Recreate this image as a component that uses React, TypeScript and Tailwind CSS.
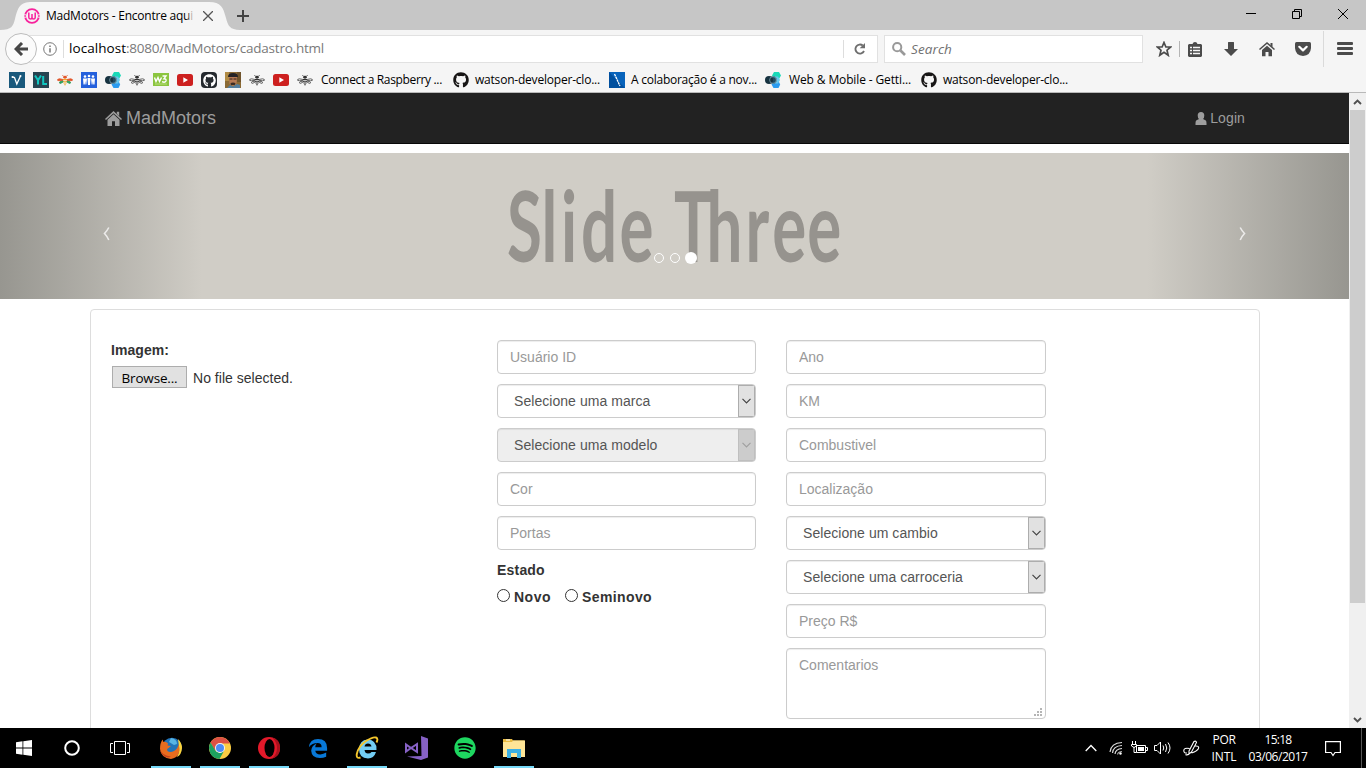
import { useLayoutEffect, useRef, type ReactNode } from "react";
import { FaGithub, FaSpotify } from "react-icons/fa";

/** Single line of text whose tracking is adjusted so that it fills the given width. */
function Fit({ w, children, className = "" }: { w: number; children: string; className?: string }) {
  const ref = useRef<HTMLSpanElement>(null);
  useLayoutEffect(() => {
    const el = ref.current;
    if (!el) return;
    el.style.letterSpacing = "0px";
    const natural = el.getBoundingClientRect().width;
    el.style.letterSpacing = `${(w - natural) / children.length}px`;
  }, [w, children]);
  return (
    <span ref={ref} className={`inline-block shrink-0 whitespace-pre ${className}`}>
      {children}
    </span>
  );
}

/* ---------- bookmark icons ---------- */

function Bee({ color = false }: { color?: boolean }) {
  const body = color ? "#f0a92c" : "#333";
  const wing = color ? "#e2572b" : "#555";
  const low = color ? "#2f9e5b" : "#555";
  return (
    <svg width="16" height="16" viewBox="0 0 16 16">
      <g transform="translate(0 1.6) scale(1 .8)">
        <path d="M6.5 7.500 2.500 6.500Q0 7 .6 8.400Q1.500 9.500 6 8.400zM9.500 7.500 13.500 6.500Q16 7 15.400 8.400Q14.500 9.500 10 8.400z" fill={color ? wing : "#f5f5f5"} stroke={wing} />
        <path d="M6 9.300 3 10.200Q1.500 12 3.500 12.300L6.500 10.200zM10 9.300 13 10.200Q14.500 12 12.500 12.300L9.500 10.200z" fill={color ? low : "#f5f5f5"} stroke={low} />
        <path d="M6.700 3.500 5.500 2M9.300 3.500 10.500 2" stroke={color ? "#e2572b" : "#333"} fill="none" />
        <circle cx="8" cy="4.500" r="1.800" fill={color ? "#e2572b" : "#333"} />
        <path d="M6 6.700h4v1.400H6zM6 9h4v1.300H6zM6.400 11.200h3.200v1.200H6.400zM7.200 13.200h1.600v1.500H7.200z" fill={body} />
      </g>
    </svg>
  );
}

function YouTube() {
  return (
    <svg width="16" height="16" viewBox="0 0 16 16">
      <rect y="2" width="16" height="12" rx="2.500" fill="#cd201f" />
      <path d="M6.300 5.300v5.400L11 8z" fill="#fff" />
    </svg>
  );
}

function Hexes() {
  return (
    <svg width="16" height="16" viewBox="0 0 16 16">
      <path d="M9 0h5l2 3.500-2 3.500H9L7 3.500z" fill="#19d9b8" />
      <path d="M8.500 9h5l1.700 3.500-1.700 3.500h-5l-2-3.500z" fill="#2a9bf0" />
      <path d="M9.500 4.500H13L15 8l-2 3.500H9.500z" fill="#67c8ee" />
      <circle cx="8" cy="8" r="3.700" fill="#1f4a60" />
      <circle cx="4" cy="8" r="4" fill="#173240" />
      <circle cx="8" cy="8" r="3.400" fill="none" stroke="#9cc3d2" strokeWidth=".6" />
    </svg>
  );
}

const small: ReactNode[] = [
  <svg key="v" width="16" height="16" viewBox="0 0 16 16">
    <rect width="16" height="16" fill="#19597c" />
    <path d="M3.500 5 5.500 5.500 7.800 12 11.500 4" fill="none" stroke="#fff" strokeWidth="1.300" />
    <circle cx="3.500" cy="5" r="1" fill="#fff" /><circle cx="11.500" cy="4" r="1" fill="#fff" />
  </svg>,
  <svg key="yl" width="16" height="16" viewBox="0 0 16 16">
    <rect width="16" height="16" fill="#264451" />
    <path d="M2 3.500 5 8.200V12.500M8 3.500 5 8.200M10.200 4V12H14" fill="none" stroke="#10c7c1" strokeWidth="2" />
  </svg>,
  <Bee key="bc" color />,
  <svg key="ppl" width="16" height="16" viewBox="0 0 16 16">
    <rect width="16" height="16" fill="#2460dc" />
    <g fill="#fff">
      <circle cx="4" cy="4.500" r="1.300" /><circle cx="8" cy="4" r="1.300" /><circle cx="12" cy="4.500" r="1.300" />
      <path d="M2 6.500h4l-.7 6H4.500L4.200 9l-.5 3.500H2.500zM6.500 6h3L9 13H7zM10 6.500h4l-.5 6h-1.200L12 9l-.5 3.500h-.8z" />
    </g>
  </svg>,
  <Hexes key="hx" />,
  <Bee key="b1" />,
  <svg key="w3" width="16" height="16" viewBox="0 0 16 16">
    <rect y="1" width="16" height="13" fill="#8bc53f" />
    <path d="M1.500 5.500 3 9.500 5 5.500 6.500 9.500 8.500 5.500M9.500 4H13L11 6.700Q13.500 6.700 13 9Q12 11 9 9.700" fill="none" stroke="#fff" strokeWidth="1.400" />
    <path d="M2 12h12" stroke="#b9dd80" />
  </svg>,
  <YouTube key="y1" />,
  <div key="gh" className="flex h-4 w-4 items-center justify-center rounded-sm bg-[#24292e] text-white"><FaGithub size={13} /></div>,
  <svg key="face" width="16" height="16" viewBox="0 0 16 16">
    <rect width="16" height="16" fill="#8b6a35" />
    <path d="M0 0h4v9H0z" fill="#b08b45" /><path d="M12 0h4v10h-4z" fill="#70542c" />
    <path d="M4 5h8l-.5 7L8 14l-3.500-2z" fill="#b77a55" />
    <path d="M3 5Q3 1 8 1t5 4L11 5H5z" fill="#252326" />
    <path d="M5.500 11 8 10.500l2.500.5-.7 2H6z" fill="#3c2c25" />
    <path d="M4.500 7h3M8.500 7h3" stroke="#33231c" /><path d="M2 16 5 13l3 1.500L12 12l3 1v3z" fill="#557e9e" />
  </svg>,
  <Bee key="b2" />,
  <YouTube key="y2" />,
  <Bee key="b3" />,
];

/* ---------- browser chrome ---------- */

function TabBar() {
  return (
    <div className="relative flex h-[30px] shrink-0 bg-[#c6c6c6]">
      <svg className="absolute left-0 top-0" width="240" height="30">
        <path d="M0 30C12 30 13 26 15 19C18 7 20 2 32 2H209C221 2 223 7 226 18C228 26 230 30 241 30z" fill="#f5f5f5" />
      </svg>
      <div className="relative flex h-8 w-[240px] items-center pl-6">
        <svg width="16" height="16" viewBox="0 0 16 16" className="shrink-0">
          <circle cx="8" cy="8" r="6.900" fill="none" stroke="#f7229c" strokeWidth="1.800" />
          <path d="M0 6.800h2M14 6.800h2M0 9.200h2M14 9.200h2" stroke="#f5f5f5" strokeWidth=".9" />
          <path d="M4.800 4.500V9.300Q4.800 11 6.400 11T8 9.300V6M8 9.300Q8 11 9.600 11T11.200 9.300V4.500" fill="none" stroke="#f7229c" strokeWidth="1.500" />
        </svg>
        <div className="relative ml-[6px] w-[148px] text-[12px] text-black">
          <Fit w={147}>MadMotors - Encontre aqui</Fit>
          <span className="absolute right-0 top-0 h-full w-2 bg-linear-to-r from-transparent to-[#f5f5f5]" />
        </div>
        <svg width="10" height="10" className="ml-[9px]" stroke="#555" strokeWidth="1.300"><path d="M0 0 10 10M10 0 0 10" /></svg>
      </div>
      <svg width="12" height="12" className="mt-[10px] -ml-[3px]" stroke="#444" strokeWidth="2"><path d="M0 6H12M6 0V12" /></svg>
      <div className="ml-auto flex items-start gap-[36px] pr-[18px] pt-[9px]">
        <svg width="10" height="10" stroke="#000"><path d="M0 4.500H10" /></svg>
        <svg width="10" height="10" stroke="#000" fill="none"><path d="M.5 2.500h7v7h-7zM2.500 2.500V.5h7v7h-2" /></svg>
        <svg width="10" height="10" stroke="#000"><path d="M0 0 10 10M10 0 0 10" /></svg>
      </div>
    </div>
  );
}

function NavRow() {
  return (
    <div className="flex h-[38px] shrink-0 items-center bg-[#f5f5f5]">
      <div className="relative z-10 ml-[5px] flex h-8 w-8 shrink-0 items-center justify-center rounded-full border border-[#bcbcbc] bg-[#fbfbfb]">
        <svg width="14" height="14" viewBox="0 0 14 14" fill="none" stroke="#474747" strokeWidth="3"><path d="M8 1 2 7 8 13M2.500 7H14" /></svg>
      </div>
      <div className="-ml-2 flex h-[28px] w-[849px] items-center border border-[#e1e1e1] bg-white">
        <svg width="14" height="14" className="ml-[13px]" fill="none" stroke="#777"><circle cx="7" cy="7" r="6.300" /><path d="M7 6.200V10.500M7 3.500V5" strokeWidth="1.500" /></svg>
        <span className="ml-[6px] h-[18px] w-px bg-[#ddd]" />
        <div className="ml-[5px] flex text-[13.5px] leading-none text-[#7a7a7a]">
          <Fit w={57} className="text-black">localhost</Fit>
          <Fit w={198}>:8080/MadMotors/cadastro.html</Fit>
        </div>
        <span className="ml-auto h-[18px] w-px bg-[#ddd]" />
        <svg width="12" height="12" viewBox="0 0 12 12" className="ml-[10px] mr-[11px]" fill="none" stroke="#6e6e6e" strokeWidth="1.900"><path d="M8.800 2.600A4.500 4.500 0 1 0 10 8" /><path d="M11 0V5.300H5.700z" fill="#6e6e6e" stroke="none" /></svg>
      </div>
      <div className="ml-[6px] flex h-[28px] w-[259px] items-center border border-[#e1e1e1] bg-white">
        <svg width="14" height="14" className="ml-[7px]" fill="none" stroke="#999"><circle cx="5.200" cy="5.200" r="4.100" strokeWidth="2" /><path d="M8.500 8.500 13 13" strokeWidth="2.600" /></svg>
        <Fit w={41} className="ml-[5px] mt-[2px] text-[13.5px] italic leading-none text-[#717171]">Search</Fit>
      </div>
      <svg width="16" height="16" viewBox="0 0 16 16" className="ml-[13px]" fill="none" stroke="#4b4b4b" strokeWidth="1.700"><path d="M8 1.500 9.900 6H14.600L11 9.200 12.200 14.300 8 11.400 3.800 14.300 5 9.200 1.400 6H6.100z" /></svg>
      <span className="ml-[7px] h-4 w-px bg-[#b5b5b5]" />
      <svg width="14" height="15" viewBox="0 0 14 15" className="ml-2"><path d="M1 2H4.500Q5 0 7 0t2.500 2H13l1 1V14l-1 1H1L0 14V3z" fill="#4b4b4b" /><path d="M2 5.500H4M5 5.500H12M2 8.500H4M5 8.500H12M2 11.500H4M5 11.500H12" stroke="#f5f5f5" strokeWidth="1.500" /></svg>
      <svg width="14" height="14" viewBox="0 0 14 14" className="ml-[22px]"><path d="M4 0.500Q4 0 4.500 0h5q.5 0 .5.500V7h4L7 14 0 7h4z" fill="#4b4b4b" /></svg>
      <svg width="16" height="15" viewBox="0 0 16 15" className="ml-[21px]" fill="#4b4b4b"><path d="M.5 7.500 8 1 15.500 7.500" fill="none" stroke="#4b4b4b" strokeWidth="1.500" /><path d="M3 8 8 3.700 13 8v6.300H9.500V10h-3v4.300H3zM11.500 1h2v4l-2-1.700z" /></svg>
      <svg width="16" height="14" viewBox="0 0 16 14" className="ml-[20px]"><path d="M1.500 0h13Q16 0 16 1.500V6Q15.500 13.500 8 14Q.5 13.500 0 6V1.500Q0 0 1.500 0z" fill="#4b4b4b" /><path d="M4.300 4.800 8 8.400 11.700 4.800" fill="none" stroke="#fff" strokeWidth="2.200" strokeLinecap="round" strokeLinejoin="round" /></svg>
      <span className="ml-3 h-9 w-px bg-[#dadada]" />
      <svg width="16" height="14" className="ml-[13px]" fill="#4b4b4b"><rect width="16" height="3" rx="1" /><rect y="5" width="16" height="3" rx="1" /><rect y="10" width="16" height="3" rx="1" /></svg>
    </div>
  );
}

function Bookmarks() {
  const item = "flex items-center text-[12px] leading-4 text-black";
  return (
    <div className="flex h-[25px] shrink-0 items-center border-b border-[#b9b9b9] bg-[#f5f5f5] pl-[9px]">
      <div className="flex gap-2">{small.map((icon, i) => <div key={i} className="h-4 w-4">{icon}</div>)}</div>
      <div className={`${item} w-[140px] pl-2`}><Fit w={121}>Connect a Raspberry ...</Fit></div>
      <div className={`${item} w-[156px] gap-[6px]`}><FaGithub size={16} className="text-[#171515]" /><Fit w={125}>watson-developer-clo...</Fit></div>
      <div className={`${item} w-[156px] gap-[6px]`}>
        <svg width="16" height="16" className="shrink-0"><rect width="16" height="16" fill="#004f9e" /><path d="M0 0h16v16z" fill="#0863bb" /><path d="M5.500 2 11 14" stroke="#fff" strokeWidth="1.300" strokeDasharray="2.500 .5" /></svg>
        <Fit w={126}>A colaboração é a nov...</Fit>
      </div>
      <div className={`${item} w-[156px] gap-2`}><span className="h-4 w-4"><Hexes /></span><Fit w={122}>Web &amp; Mobile - Getti...</Fit></div>
      <div className={`${item} gap-[6px]`}><FaGithub size={16} className="text-[#171515]" /><Fit w={125}>watson-developer-clo...</Fit></div>
    </div>
  );
}

/* ---------- page ---------- */

function Navbar() {
  return (
    <nav className="flex h-[51px] items-center justify-between border-b border-[#080808] bg-[#222] pl-[105px] pr-[104px] text-[#9d9d9d]">
      <div className="flex items-center gap-1 text-[18px]">
        <svg width="17" height="15" viewBox="0 0 17 15" fill="#9d9d9d"><path d="M8.500 0 17 8l-1 1L8.500 2.300 1 9 0 8zM11.800.8h2.400v4.200l-2.400-2.200zM8.500 3.200 14.500 8.700v6.300H10V10.200H7V15H2.500V8.700z" /></svg>
        <span>MadMotors</span>
      </div>
      <div className="flex items-center gap-[3px] text-[14px]">
        <svg width="12" height="13" viewBox="0 0 12 13" fill="#9d9d9d" className="mt-px"><path d="M6 0Q9.300 0 9.300 3.500Q9.300 5.800 8 7L10.500 8.200Q11.500 9 11.500 11V13H.5V11Q.5 9 1.500 8.200L4 7Q2.700 5.800 2.700 3.500Q2.700 0 6 0z" /></svg>
        <span className="tracking-[0.1px]">Login</span>
      </div>
    </nav>
  );
}

function Carousel() {
  return (
    <div className="relative mt-[9px] h-[146px] bg-[#d0cdc6]">
      <svg width="1349" height="146" className="block" fill="#96938e" fontFamily="Lato, sans-serif" fontWeight="700" fontSize="98">
        <text transform="scale(.65 1)" x="780 833 863 894 953 1005 1037 1087 1147 1188 1242" y="109">Slide Three</text>
      </svg>
      <div className="absolute inset-y-0 left-0 w-[202px] bg-linear-to-r from-[#979690] to-[#d0cdc6]" />
      <div className="absolute inset-y-0 right-0 w-[202px] bg-linear-to-r from-[#d0cdc6] to-[#979690]" />
      <svg className="absolute left-[103px] top-[73px]" width="7" height="15" fill="none" stroke="#ecebea" strokeWidth="1.600"><path d="M5.800 1.500Q4 5 1.500 7.500Q4 10 5.800 14" /></svg>
      <svg className="absolute left-[1239px] top-[73px]" width="7" height="15" fill="none" stroke="#ecebea" strokeWidth="1.600"><path d="M1.200 1.500Q3 5 5.500 7.500Q3 10 1.200 14" /></svg>
      <div className="absolute left-[654px] top-[99px] flex items-center">
        <span className="h-[10px] w-[10px] rounded-full border border-white" />
        <span className="ml-[6px] h-[10px] w-[10px] rounded-full border border-white" />
        <span className="ml-[5px] h-3 w-3 rounded-full bg-white" />
      </div>
    </div>
  );
}

const box = "h-[34px] w-full rounded-[4px] border border-[#ccc] shadow-[inset_0_1px_1px_rgba(0,0,0,0.075)]";

function Field({ label }: { label: string }) {
  return <input placeholder={label} className={`${box} block bg-white px-3 text-[14px] placeholder:text-[#999]`} />;
}

function Choice({ label, disabled = false }: { label: string; disabled?: boolean }) {
  return (
    <div className={`${box} flex items-center overflow-hidden pl-4 ${disabled ? "bg-[#eee]" : "bg-white"}`}>
      <span className="tracking-[0.05px] text-[#555]">{label}</span>
      <span className={`ml-auto flex h-full w-[17px] items-center border pl-[3px] ${disabled ? "border-[#bfbfbf] bg-[#ccc]" : "border-[#adadad] bg-[#e1e1e1]"}`}>
        <svg width="9" height="6" fill="none" stroke={disabled ? "#a0a0a0" : "#444"} strokeWidth="1.200"><path d="M.5 .8 4.500 4.800 8.500 .8" /></svg>
      </span>
    </div>
  );
}

function Radio({ label, w }: { label: string; w: number }) {
  return (
    <label className="flex items-start">
      <span className="h-[13px] w-[13px] rounded-full border border-[#333] bg-white" />
      <b className="ml-1 -mt-[2px] leading-5"><Fit w={w}>{label}</Fit></b>
    </label>
  );
}

function FormPanel() {
  return (
    <div className="ml-[90px] mt-[10px] flex h-[460px] w-[1170px] rounded-[4px] border border-[#ddd] bg-white pl-[20px] pt-[30px] text-[14px] leading-5 text-[#333]">
      <div className="w-[386px]">
        <b className="block tracking-[0.05px]">Imagem:</b>
        <div className="mt-[6px] flex items-center pl-px">
          <button className="flex h-[22px] w-[75px] items-center justify-center border border-[#adadad] bg-[#e1e1e1] pt-px font-['Open_Sans'] text-[13.5px] text-black"><Fit w={56}>Browse...</Fit></button>
          <Fit w={100} className="ml-[6px] mt-[2px]">No file selected.</Fit>
        </div>
      </div>
      <div className="flex w-[259px] flex-col gap-[10px]">
        <Field label="Usuário ID" />
        <Choice label="Selecione uma marca" />
        <Choice label="Selecione uma modelo" disabled />
        <Field label="Cor" />
        <Field label="Portas" />
        <b className="tracking-[0.2px]">Estado</b>
        <div className="-mt-[1px] flex gap-[14px]">
          <Radio label="Novo" w={37} />
          <Radio label="Seminovo" w={70} />
        </div>
      </div>
      <div className="ml-[30px] flex w-[260px] flex-col gap-[10px]">
        <Field label="Ano" />
        <Field label="KM" />
        <Field label="Combustivel" />
        <Field label="Localização" />
        <Choice label="Selecione um cambio" />
        <Choice label="Selecione uma carroceria" />
        <Field label="Preço R$" />
        <div className="relative h-[71px] rounded-[4px] border border-[#ccc] px-3 py-[6px] text-[#999] shadow-[inset_0_1px_1px_rgba(0,0,0,0.075)]">
          Comentarios
          <svg className="absolute bottom-[2px] right-[3px]" width="8" height="8" fill="#b5b5b5"><path d="M6 0h2v2H6zM3 3h2v2H3zM6 3h2v2H6zM0 6h2v2H0zM3 6h2v2H3zM6 6h2v2H6z" /></svg>
        </div>
      </div>
    </div>
  );
}

function Scrollbar() {
  return (
    <div className="flex w-[17px] shrink-0 flex-col items-center bg-[#f0f0f0]">
      <div className="flex h-[17px] items-center"><svg width="9" height="6" fill="none" stroke="#505050" strokeWidth="1.900"><path d="M1 5 4.500 1.500 8 5" /></svg></div>
      <div className="h-[493px] w-[15px] bg-[#cdcdcd]" />
      <div className="mt-auto flex h-[17px] items-center"><svg width="9" height="6" fill="none" stroke="#505050" strokeWidth="1.900"><path d="M1 1 4.500 4.500 8 1" /></svg></div>
    </div>
  );
}

/* ---------- taskbar ---------- */

function App24({ open = false, children }: { open?: boolean; children: ReactNode }) {
  return (
    <div className="relative flex h-10 w-10 items-center justify-center">
      {children}
      {open && <span className="absolute inset-x-0 bottom-0 h-[2px] bg-[#76d9f8]" />}
    </div>
  );
}

const eShape = "M1 10Q2 1 11 1Q21 1 21 11V14H8Q8.500 18 13.500 18Q17 18 20 16V20.500Q17 22 13 22Q4 22 3.500 14Q4 8 9.500 6Q8 8 8 10H15Q15 5.500 10.500 5.500Q4.500 5.500 1 10z";

function Taskbar() {
  return (
    <div className="flex h-10 shrink-0 items-center bg-black font-['Open_Sans'] text-white">
      <svg width="16" height="16" viewBox="0 0 16 16" className="ml-4" fill="#fff"><path d="M0 2.300 6.500 1.300V7.500H0zM7.300 1.200 16 0V7.500H7.300zM0 8.400H6.500V14.700L0 13.700zM7.300 8.400H16V16L7.300 14.800z" /></svg>
      <svg width="16" height="16" className="ml-8" fill="none" stroke="#fff" strokeWidth="2"><circle cx="8" cy="8" r="6.800" /></svg>
      <svg width="20" height="14" className="ml-[30px]" fill="none" stroke="#fff"><path d="M4.500 .5h11v13h-11zM3 2.500H.5v9H3M17 2.500h2.500v9H17" /></svg>
      <div className="ml-[21px] flex gap-[9px]">
        <App24 open>
          <svg width="22" height="22" viewBox="0 0 22 22">
            <circle cx="12" cy="10.500" r="9.800" fill="#2274b8" />
            <path d="M11 1Q17 2 17 7L14 8 9 5z" fill="#58b5e4" />
            <path d="M18 2Q22 6 22 11Q21.500 18 17 20Q20 15 19 9z" fill="#fbd33b" />
            <path d="M18.500 7Q22 20 11 22Q1 21 0 12Q0 6 2.500 2.500L3.500 5Q6 4 8 6.500L7.500 8.500 11 9 8 11.500Q6.500 11.500 7.500 14Q10 16 14 14Q18 12 18.500 7z" fill="#e86c1e" />
            <path d="M0 12Q2 19 11 19.500Q7 22 3 18Q0 15 0 12z" fill="#c4401d" />
          </svg>
        </App24>
        <App24 open>
          <svg width="22" height="22" viewBox="0 0 22 22">
            <circle cx="11" cy="11" r="11" fill="#fbcd43" />
            <path d="M11 11 6.200 13.800 1.500 5.500Q5 0 11 0Q17.500 0 20.600 6H11z" fill="#dd5144" />
            <path d="M1.500 5.500 6.700 14 11 16 15 14 10.500 22Q1 21.500 0 11Q0 8 1.500 5.500z" fill="#1da160" />
            <path d="M11 6H20.500" stroke="#dd5144" />
            <circle cx="11" cy="11" r="5" fill="#f4f4f4" /><circle cx="11" cy="11" r="4" fill="#4c8bf5" />
          </svg>
        </App24>
        <App24 open>
          <svg width="22" height="22" viewBox="0 0 22 22"><circle cx="11" cy="11" r="11" fill="#e3192a" /><path d="M14 .5Q22 2 22 11T14 21.500Q19 17 19 11T14 .5z" fill="#a9121d" /><ellipse cx="11.500" cy="11" rx="5" ry="8.900" fill="#000" /></svg>
        </App24>
        <App24><svg width="20" height="21" viewBox="0 0 22 23"><path d={eShape} fill="#0878d7" /></svg></App24>
        <App24 open>
          <svg width="24" height="24" viewBox="0 0 24 24">
            <path d="M12.500 3.500Q22 4 21.500 14H9.500Q10 17.500 13 17.500Q15.500 17.500 16.500 16H21Q19 22.500 13 22.500Q4 22 4 13Q4.500 4 12.500 3.500zM9.500 10.500H16.500Q16 7.500 13 7.500T9.500 10.500z" fill="#73cdf3" />
            <path d="M5.500 21.500Q1 23 1.800 18Q3.500 10 11 5Q18 .5 21 1.500Q23.500 2.500 21.500 6.500" fill="none" stroke="#f5c62c" strokeWidth="1.900" />
          </svg>
        </App24>
        <App24><svg width="24" height="24" viewBox="0 0 24 24"><path d="M17 0 24 2.500V21.500L17 24 3 20.500 17.500 20z" fill="#8661c5" /><path d="M2 8.500V15.500L7 12 13 16V8L7 12z" fill="none" stroke="#8661c5" strokeWidth="2" /></svg></App24>
        <App24><FaSpotify size={22} className="text-[#1ed760]" /></App24>
        <App24 open>
          <svg width="22" height="19" viewBox="0 0 22 19"><path d="M0 0h9l1 1.500H21.500V18H0z" fill="#e8bb42" /><path d="M0 3h9l1-1.500h12V18H0z" fill="#fee597" /><path d="M4 10h14v9h-4v-5H8v5H4z" fill="#3cb0e5" /><path d="M3 1h4" stroke="#fff" /></svg>
        </App24>
      </div>
      <div className="ml-auto flex h-full items-center">
        <svg width="12" height="8" fill="none" stroke="#fff" strokeWidth="1.300"><path d="M.7 7 6 1.500 11.300 7" /></svg>
        <svg width="14" height="14" viewBox="0 0 14 14" className="ml-[12px]" fill="none" stroke="#aaa" strokeWidth="1.200"><path d="M1 11Q2 2 13 1.500M3.500 12Q4 5 13 4.500M6 13Q6.500 8 13 7.500" stroke="#ddd" /><path d="M8.500 13.500Q9 10.500 13 10.500" /><circle cx="11.500" cy="12.500" r="1.200" fill="#fff" stroke="none" /></svg>
        <svg width="17" height="14" className="ml-[8px]" fill="none" stroke="#fff"><path d="M5.500 4.500h9v7h-9zM15 6.500h1.500v3H15M1.500 0V3M4.500 0V3M.5 3.500h5V5L3 6.500.5 5zM3 6V11.500H5.500" /><path d="M7 6h6v4H7z" fill="#fff" stroke="none" /></svg>
        <svg width="18" height="14" className="ml-[6px]" fill="none" stroke="#fff"><path d="M.5 4.500H3L6.500 1V13L3 9.500H.5zM9 4.500Q10.500 7 9 9.500M11.500 3Q14 7 11.500 11M14 1.500Q18 7 14 12.500" /></svg>
        <svg width="17" height="16" className="ml-[11px]" fill="none" stroke="#fff" strokeWidth="1.100"><path d="M6 11 11 1.500Q13 .5 13.500 2.500L8.500 12 6 14zM6.500 8.500Q.8 7.500 .8 10.500T4 13M6 14Q4 15.500 2.500 14.500M11.500 6Q16.500 5.500 15.500 8.500Q14.500 11 8.500 13" /></svg>
        <div className="ml-[12px] mr-px flex w-[24px] flex-col items-center text-[12px] leading-[17px]"><Fit w={23}>POR</Fit><Fit w={25}>INTL</Fit></div>
        <div className="ml-[11px] flex w-[60px] flex-col items-center text-[12px] leading-[17px]"><Fit w={27}>15:18</Fit><Fit w={59}>03/06/2017</Fit></div>
        <svg width="16" height="17" className="ml-[17px] mr-[20px]" fill="none" stroke="#fff" strokeWidth="1.200"><path d="M.6 1.600H15.400V12.500H10L8 15.500 6 12.500H.6z" /></svg>
        <span className="mr-1 h-full w-px bg-[#555]" />
      </div>
    </div>
  );
}

export default function App() {
  return (
    <div className="flex h-[768px] w-[1366px] flex-col overflow-hidden bg-white">
      <header className="font-['Open_Sans',sans-serif]">
        <TabBar />
        <NavRow />
        <Bookmarks />
      </header>
      <div className="flex min-h-0 flex-1 overflow-hidden font-['Liberation_Sans',Arial,sans-serif]">
        <main className="w-[1349px] overflow-hidden">
          <Navbar />
          <Carousel />
          <FormPanel />
        </main>
        <Scrollbar />
      </div>
      <Taskbar />
    </div>
  );
}
